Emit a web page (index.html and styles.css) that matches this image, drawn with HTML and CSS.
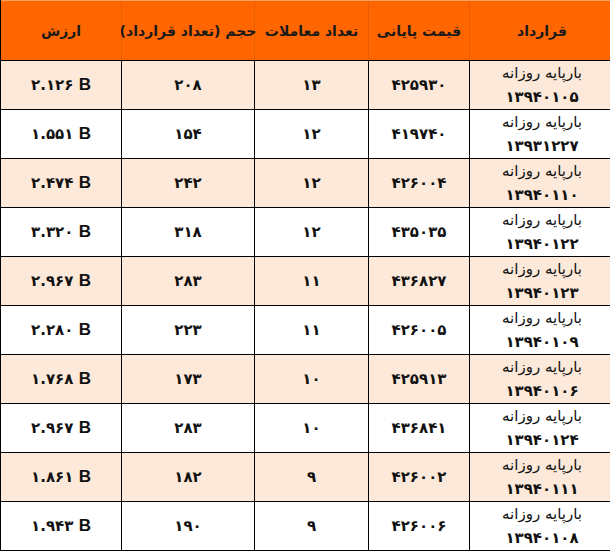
FILE: index.html
```html
<!DOCTYPE html>
<html lang="fa">
<head>
<meta charset="utf-8">
<title>معاملات بارپایه روزانه</title>
<link rel="stylesheet" href="styles.css">
</head>
<body>
<div class="table" dir="rtl">
  <div class="row head">
    <div class="cell">قرارداد</div>
    <div class="cell">قیمت پایانی</div>
    <div class="cell">تعداد معاملات</div>
    <div class="cell">حجم (تعداد قرارداد)</div>
    <div class="cell">ارزش</div>
  </div>
  <div class="row alt">
    <div class="cell name">بارپایه روزانه<br><span class="date">۱۳۹۴۰۱۰۵</span></div>
    <div class="cell">۴۲۵۹۳۰</div>
    <div class="cell">۱۳</div>
    <div class="cell">۲۰۸</div>
    <div class="cell"><span class="val">۲.۱۲۶ <b>B</b></span></div>
  </div>
  <div class="row">
    <div class="cell name">بارپایه روزانه<br><span class="date">۱۳۹۳۱۲۲۷</span></div>
    <div class="cell">۴۱۹۷۴۰</div>
    <div class="cell">۱۲</div>
    <div class="cell">۱۵۴</div>
    <div class="cell"><span class="val">۱.۵۵۱ <b>B</b></span></div>
  </div>
  <div class="row alt">
    <div class="cell name">بارپایه روزانه<br><span class="date">۱۳۹۴۰۱۱۰</span></div>
    <div class="cell">۴۲۶۰۰۴</div>
    <div class="cell">۱۲</div>
    <div class="cell">۲۴۲</div>
    <div class="cell"><span class="val">۲.۴۷۴ <b>B</b></span></div>
  </div>
  <div class="row">
    <div class="cell name">بارپایه روزانه<br><span class="date">۱۳۹۴۰۱۲۲</span></div>
    <div class="cell">۴۳۵۰۳۵</div>
    <div class="cell">۱۲</div>
    <div class="cell">۳۱۸</div>
    <div class="cell"><span class="val">۳.۳۲۰ <b>B</b></span></div>
  </div>
  <div class="row alt">
    <div class="cell name">بارپایه روزانه<br><span class="date">۱۳۹۴۰۱۲۳</span></div>
    <div class="cell">۴۳۶۸۲۷</div>
    <div class="cell">۱۱</div>
    <div class="cell">۲۸۳</div>
    <div class="cell"><span class="val">۲.۹۶۷ <b>B</b></span></div>
  </div>
  <div class="row">
    <div class="cell name">بارپایه روزانه<br><span class="date">۱۳۹۴۰۱۰۹</span></div>
    <div class="cell">۴۲۶۰۰۵</div>
    <div class="cell">۱۱</div>
    <div class="cell">۲۲۳</div>
    <div class="cell"><span class="val">۲.۲۸۰ <b>B</b></span></div>
  </div>
  <div class="row alt">
    <div class="cell name">بارپایه روزانه<br><span class="date">۱۳۹۴۰۱۰۶</span></div>
    <div class="cell">۴۲۵۹۱۳</div>
    <div class="cell">۱۰</div>
    <div class="cell">۱۷۳</div>
    <div class="cell"><span class="val">۱.۷۶۸ <b>B</b></span></div>
  </div>
  <div class="row">
    <div class="cell name">بارپایه روزانه<br><span class="date">۱۳۹۴۰۱۲۴</span></div>
    <div class="cell">۴۳۶۸۴۱</div>
    <div class="cell">۱۰</div>
    <div class="cell">۲۸۳</div>
    <div class="cell"><span class="val">۲.۹۶۷ <b>B</b></span></div>
  </div>
  <div class="row alt">
    <div class="cell name">بارپایه روزانه<br><span class="date">۱۳۹۴۰۱۱۱</span></div>
    <div class="cell">۴۲۶۰۰۲</div>
    <div class="cell">۹</div>
    <div class="cell">۱۸۲</div>
    <div class="cell"><span class="val">۱.۸۶۱ <b>B</b></span></div>
  </div>
  <div class="row">
    <div class="cell name">بارپایه روزانه<br><span class="date">۱۳۹۴۰۱۰۸</span></div>
    <div class="cell">۴۲۶۰۰۶</div>
    <div class="cell">۹</div>
    <div class="cell">۱۹۰</div>
    <div class="cell"><span class="val">۱.۹۴۳ <b>B</b></span></div>
  </div>
</div>
</body>
</html>
```
FILE: styles.css
```css
html, body {
  margin: 0;
  padding: 0;
  overflow: hidden;
  background: #ffffff;
}

.table {
  width: 615px;
  display: flex;
  flex-direction: column;
  row-gap: 1px;
  background: #000000;
  padding: 0 1px 1px 1px;
  box-sizing: border-box;
  font-family: "DejaVu Sans", "Liberation Sans", sans-serif;
  font-weight: bold;
  color: #111111;
}

.row {
  display: grid;
  grid-template-columns: 144px 100px 113px 132px 120px;
  column-gap: 1px;
  height: 48px;
}

.row.head {
  height: 59px;
  border-top: 1px solid #f8a060;
  background: #e85e00;
}

.cell {
  display: flex;
  align-items: center;
  justify-content: center;
  text-align: center;
  background: #ffffff;
  font-size: 15px;
  line-height: 24px;
  white-space: nowrap;
}

.row.alt .cell {
  background: #fde9d9;
}

.row.head .cell {
  background: #ff6600;
  font-size: 14px;
  color: #1a1a1a;
}

.cell.name {
  display: block;
  font-weight: normal;
  font-size: 15px;
  line-height: 24px;
}

.date {
  font-weight: bold;
}

.val {
  direction: ltr;
  unicode-bidi: isolate;
}

.val b {
  font-family: "Liberation Sans", Arial, sans-serif;
  font-size: 17px;
}
```
